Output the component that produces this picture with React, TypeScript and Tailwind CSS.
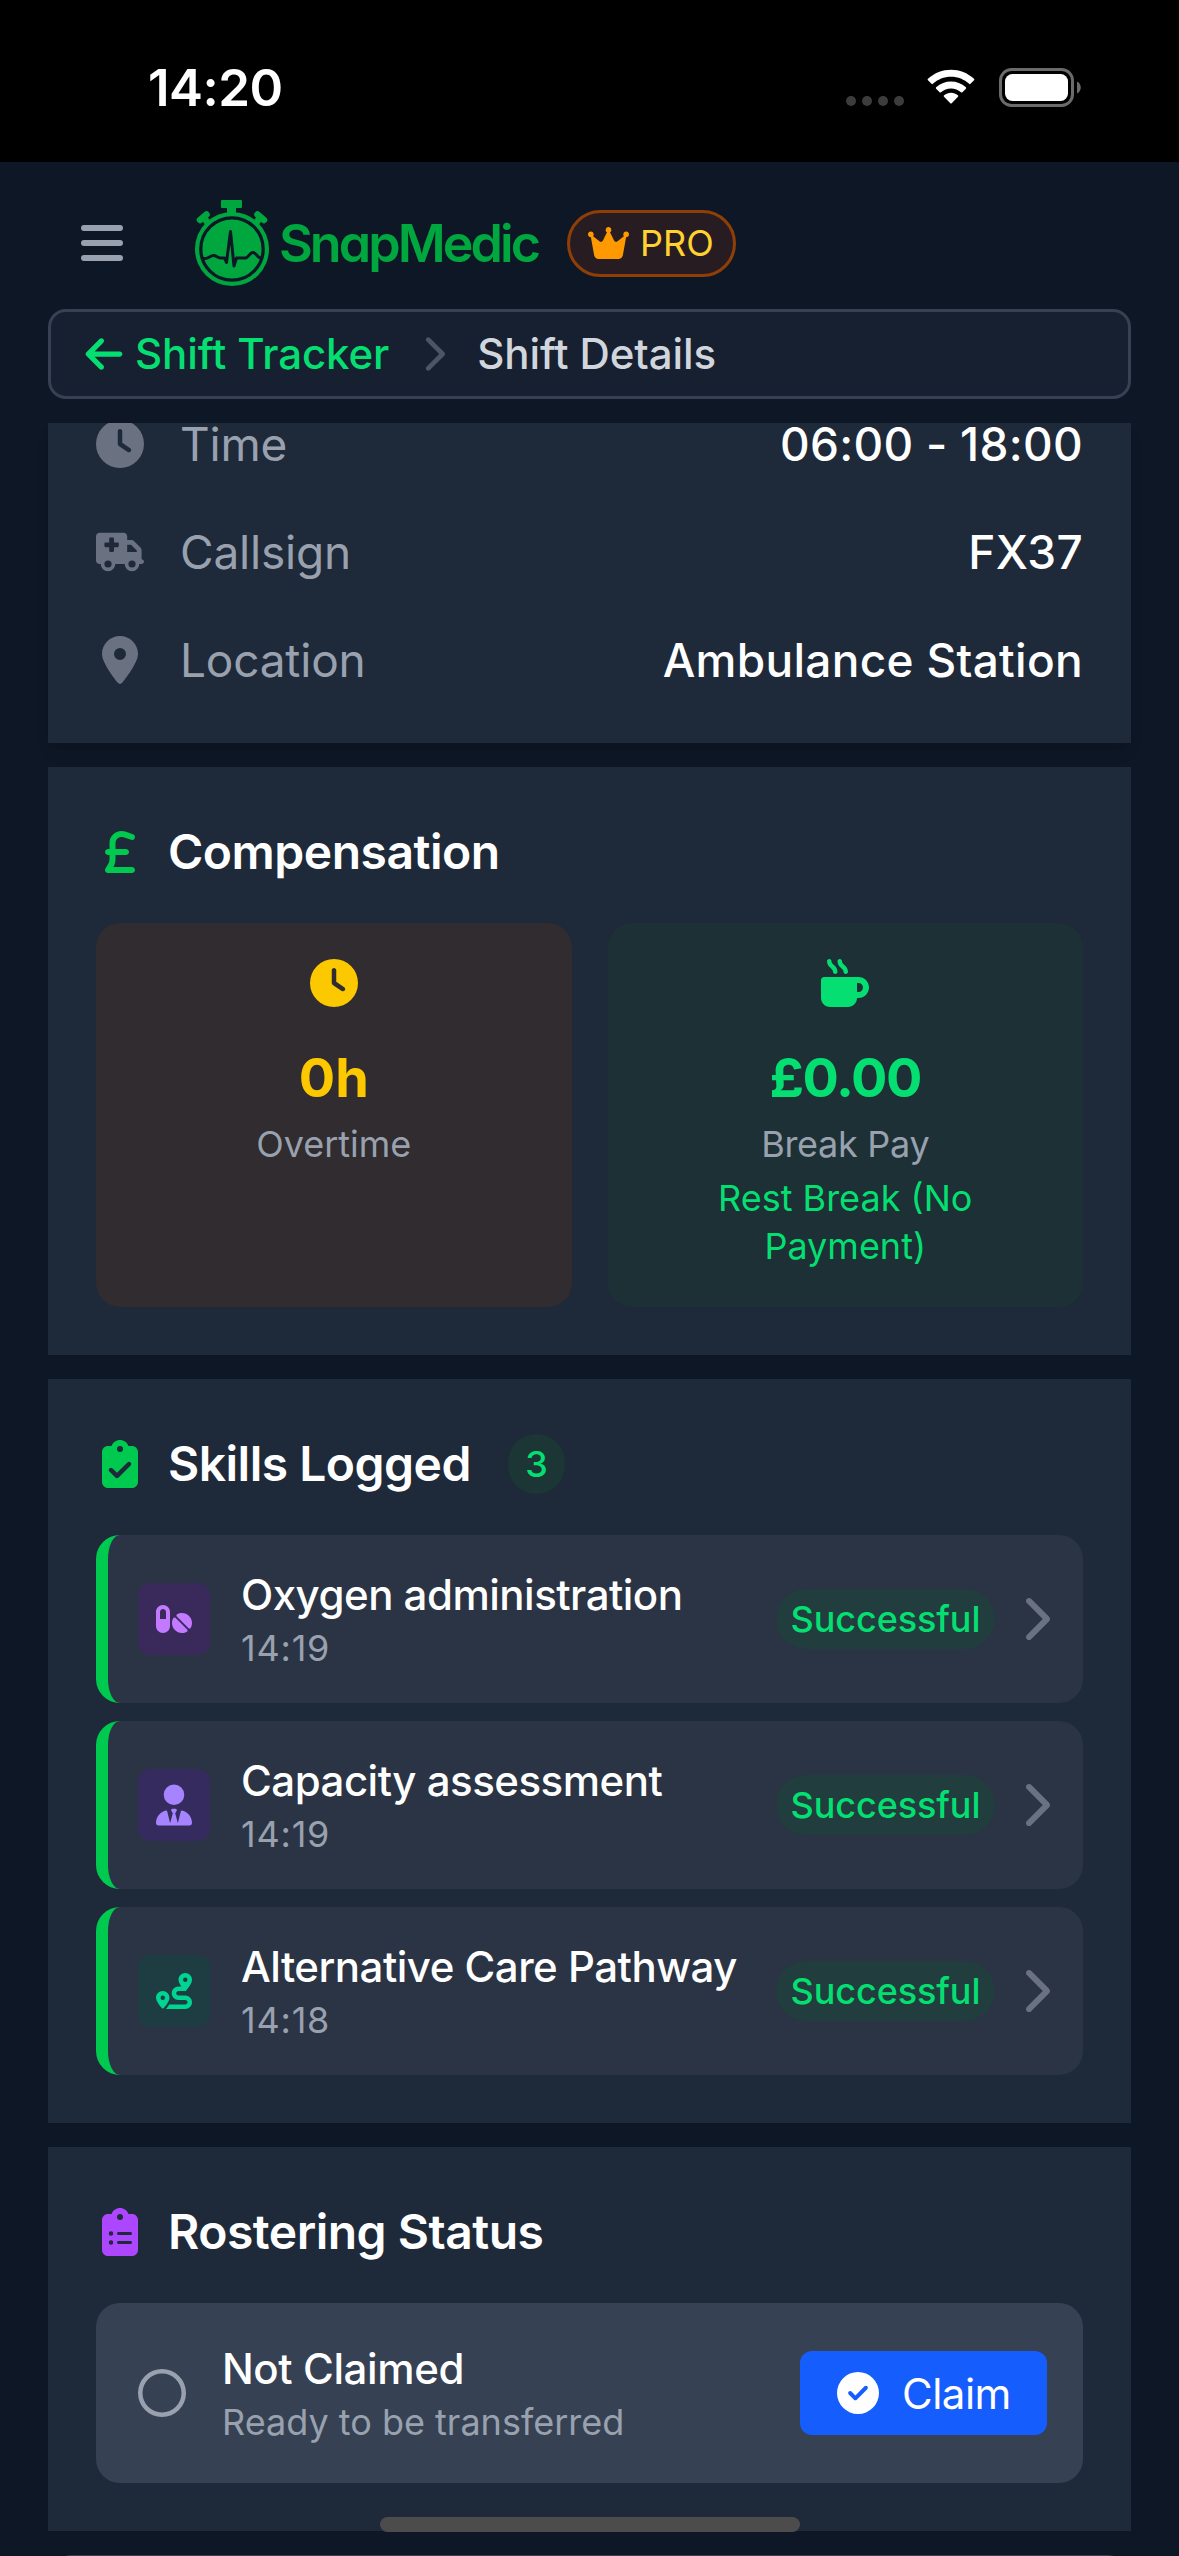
import React from "react";
import type { IconType } from "react-icons";
import {
  FaArrowLeft,
  FaChevronRight,
  FaCircleCheck,
  FaClipboardCheck,
  FaClipboardList,
  FaClock,
  FaCrown,
  FaLocationDot,
  FaMugHot,
  FaPills,
  FaRegCircle,
  FaRoute,
  FaSterlingSign,
  FaTruckMedical,
  FaUserTie,
} from "react-icons/fa6";

interface Skill {
  name: string;
  time: string;
  icon: IconType;
  tile: string;
}

const details = [
  { label: "Time", value: "06:00 - 18:00", icon: FaClock },
  { label: "Callsign", value: "FX37", icon: FaTruckMedical },
  { label: "Location", value: "Ambulance Station", icon: FaLocationDot },
];

const skills: Skill[] = [
  { name: "Oxygen administration", time: "14:19", icon: FaPills, tile: "bg-[#3a2a5c] text-[#c27aff]" },
  { name: "Capacity assessment", time: "14:19", icon: FaUserTie, tile: "bg-[#352b5e] text-[#a684ff]" },
  { name: "Alternative Care Pathway", time: "14:18", icon: FaRoute, tile: "bg-[#1d3d43] text-[#00d492]" },
];

const StatusBar: React.FC = () => (
  <div className="h-[162px] shrink-0 bg-black flex items-center justify-between pl-[148px] pr-[98px] pt-[13px]">
    <span className="text-[51px] font-semibold leading-none text-white tracking-[-0.5px]">14:20</span>
    <div className="flex items-center">
      <div className="flex gap-[6px] mt-[26px] mr-[22px]">
        <span className="w-[10px] h-[10px] rounded-full bg-[#3c3c3c]" />
        <span className="w-[10px] h-[10px] rounded-full bg-[#3c3c3c]" />
        <span className="w-[10px] h-[10px] rounded-full bg-[#3c3c3c]" />
        <span className="w-[10px] h-[10px] rounded-full bg-[#3c3c3c]" />
      </div>
      <svg width="50" height="37" viewBox="0 0 51 37" fill="#fff">
        <path d="M25.5 7.6c7.1 0 13.6 2.7 18.5 7.2.4.4 1 .4 1.4 0l3.6-3.6c.4-.4.4-1 0-1.5C36-2.7 15-2.7 2 9.7c-.4.4-.4 1.1 0 1.5l3.6 3.6c.4.4 1 .4 1.4 0 4.9-4.5 11.4-7.2 18.5-7.2z" />
        <path d="M25.5 19.6c3.9 0 7.4 1.4 10.2 3.8.4.4 1 .4 1.4 0l3.6-3.6c.4-.4.4-1.1 0-1.5-8.6-7.9-21.8-7.9-30.4 0-.4.4-.4 1.1 0 1.5l3.6 3.6c.4.4 1 .4 1.4 0 2.8-2.4 6.3-3.8 10.2-3.8z" />
        <path d="M32.6 28c.4-.4.4-1.1-.1-1.5-4-3.4-10-3.4-14 0-.5.4-.5 1.1-.1 1.5l6.400 6.5c.4.4 1 .4 1.4 0z" />
      </svg>
      <svg className="ml-[23px]" width="82" height="39" viewBox="0 0 82 39">
        <rect x="1.5" y="1.5" width="72" height="36" rx="11" fill="none" stroke="#6b6b6b" strokeWidth="3" />
        <rect x="6" y="6" width="63" height="27" rx="7.5" fill="#fff" />
        <path d="M78 13.5c5 2 5 10 0 12z" fill="#6b6b6b" />
      </svg>
    </div>
  </div>
);

const Logo: React.FC = () => (
  <svg width="350" height="88" viewBox="0 0 350 88">
    {/* Stopwatch */}
    <g fill="#00a63e">
      <path d="M28 1h19q1 0 1 1v6q0 1-1 1h-5v6h-9V9h-5q-1 0-1-1V2q0-1 1-1z" />
      <circle cx="38" cy="50" r="37" />
    </g>
    <g stroke="#00a63e" strokeWidth="6.5" strokeLinecap="round">
      <path d="m6 21 6.5-5.5M9.5 18l6 8" />
      <path d="m70 21-6.5-5.5M66.5 18l-6 8" />
    </g>
    <circle cx="38" cy="50" r="31.2" fill="none" stroke="#0e1726" strokeWidth="3.3" />
    <path
      d="M8.5 59.5h3c3 0 5-3 8-3s4 2.5 7 2.5h4l2 4.5 4-31 3.5 34.5 2.5-8h9c3 0 4-5.5 7.5-5.5s3.5 5.5 8 5.5h2"
      fill="none"
      stroke="#0e1726"
      strokeWidth="3"
      strokeLinejoin="round"
    />
    <text
      x="85"
      y="63"
      textLength="262"
      fill="#00a63e"
      className="font-['Inter',sans-serif] text-[52px] font-semibold [font-feature-settings:'cv11']"
    >
      SnapMedic
    </text>
  </svg>
);

const SectionTitle: React.FC<{ icon: React.ReactNode; children: React.ReactNode }> = ({ icon, children }) => (
  <div className="flex items-center h-[84px]">
    <span className="w-[48px] mr-[24px] flex justify-center text-[48px]">{icon}</span>
    <h2 className="text-[48px] font-semibold text-white tracking-[-0.5px]">{children}</h2>
  </div>
);

const App: React.FC = () => {
  return (
    <div className="relative w-[1179px] h-[2556px] overflow-hidden bg-[#0e1726] flex flex-col font-['Inter',sans-serif]">
      <div className="relative z-10 shrink-0 h-[423px] bg-[#0e1726] flex flex-col">
        <StatusBar />

        <header className="shrink-0 h-[147px] flex items-center pl-[81px] pt-[15px]">
          <div className="flex flex-col gap-[9px] w-[42px]">
            <span className="h-[6px] rounded-full bg-[#99a1af]" />
            <span className="h-[6px] rounded-full bg-[#99a1af]" />
            <span className="h-[6px] rounded-full bg-[#99a1af]" />
          </div>
          <div className="ml-[71px]">
            <Logo />
          </div>
          <div className="ml-[23px] w-[169px] h-[67px] rounded-full border-[3px] border-[#8f3e06] bg-[#271c21] flex items-center pl-[18px]">
            <FaCrown className="w-[41px] h-[38px] text-[#fe9a00]" />
            <span className="ml-[11px] text-[36px] text-[#ffd230]">PRO</span>
          </div>
        </header>

        {/* Breadcrumb */}
        <nav className="shrink-0 mx-[48px] h-[90px] rounded-[18px] border-[3px] border-[#364153] bg-[#172031] flex items-center pl-[34px] pb-[1px] text-[42px] tracking-[-0.1px] font-medium">
          <FaArrowLeft className="w-[38px] h-[42px] text-[#05df72]" />
          <span className="ml-[12px] text-[#05df72]">Shift Tracker</span>
          <FaChevronRight className="ml-[32px] w-[24px] h-[42px] text-[#4a5565]" />
          <span className="ml-[32px] text-[#d1d5dc]">Shift Details</span>
        </nav>
      </div>

      <main className="flex-1 min-h-0 px-[48px] flex flex-col gap-[24px]">
        <section className="shrink-0 h-[320px] px-[48px] bg-[#1e2939] shadow-lg flex flex-col justify-end pb-[29px]">
          {details.map(({ label, value, icon: Icon }) => (
            <div key={label} className="shrink-0 h-[108px] flex items-center text-[46px] leading-[40px]">
              <Icon className="w-[48px] h-[48px] text-[#6a7282]" />
              <span className="ml-[36px] tracking-[-0.2px] text-[#99a1af]">{label}</span>
              <span className="ml-auto font-medium tracking-[0.3px] text-white">{value}</span>
            </div>
          ))}
        </section>

        <section className="shrink-0 h-[588px] p-[48px] pt-[43px] bg-[#1e2939]">
          <SectionTitle icon={<FaSterlingSign className="text-[#00c950]" />}>Compensation</SectionTitle>
          <div className="mt-[29px] grid grid-cols-2 gap-[36px] text-center">
            <div className="h-[384px] rounded-[24px] bg-[#302c2f] flex flex-col items-center pt-[36px]">
              <FaClock className="w-[48px] h-[48px] text-[#fcc800]" />
              <p className="mt-[35px] text-[54px] leading-[72px] font-bold text-[#fcc800]">0h</p>
              <p className="mt-[6px] text-[36px] leading-[48px] text-[#99a1af]">Overtime</p>
            </div>
            <div className="h-[384px] rounded-[24px] bg-[#1d3035] flex flex-col items-center pt-[36px]">
              <FaMugHot className="w-[48px] h-[48px] text-[#05df72]" />
              <p className="mt-[35px] text-[54px] leading-[72px] font-bold tracking-[-1.4px] text-[#05df72]">£0.00</p>
              <p className="mt-[6px] text-[36px] leading-[48px] tracking-[-0.3px] text-[#99a1af]">Break Pay</p>
              <p className="mt-[6px] w-[300px] text-[36px] leading-[48px] text-[#05df72]">Rest Break (No Payment)</p>
            </div>
          </div>
        </section>

        <section className="shrink-0 h-[744px] p-[48px] pt-[43px] bg-[#1e2939]">
          <div className="flex items-center">
            <SectionTitle icon={<FaClipboardCheck className="text-[#00c950]" />}>Skills Logged</SectionTitle>
            <span className="ml-[37px] w-[57px] h-[60px] rounded-full bg-[#1c3535] flex items-center justify-center text-[36px] font-medium text-[#05df72]">
              3
            </span>
          </div>
          <div className="mt-[29px] flex flex-col gap-[18px]">
            {skills.map(({ name, time, icon: Icon, tile }) => (
              <div key={name} className="h-[168px] rounded-[24px] border-l-[12px] border-[#00c950] bg-[#2a3444] flex items-center pl-[30px] pr-[33px]">
                <div className={`w-[72px] h-[72px] rounded-[12px] flex items-center justify-center ${tile}`}>
                  <Icon className="w-[36px] h-[42px]" />
                </div>
                <div className="ml-[31px] pb-[2px]">
                  <p className="text-[42px] leading-[60px] font-medium tracking-[-0.5px] text-white">{name}</p>
                  <p className="-mt-[1px] text-[36px] leading-[48px] tracking-[0.8px] text-[#99a1af]">{time}</p>
                </div>
                <span className="ml-auto w-[219px] h-[60px] rounded-full bg-[#213d3e] flex items-center justify-center text-[36px] font-medium tracking-[-0.1px] text-[#05df72]">
                  Successful
                </span>
                <FaChevronRight className="ml-[25px] w-[30px] h-[48px] text-[#6a7282]" />
              </div>
            ))}
          </div>
        </section>

        <section className="shrink-0 h-[384px] p-[48px] pt-[43px] bg-[#1e2939]">
          <SectionTitle icon={<FaClipboardList className="text-[#ad46ff]" />}>Rostering Status</SectionTitle>
          <div className="mt-[29px] h-[180px] rounded-[24px] bg-[#364153] flex items-center pl-[42px] pr-[36px]">
            <FaRegCircle className="w-[48px] h-[48px] text-[#99a1af]" />
            <div className="ml-[36px] pb-[2px]">
              <p className="text-[42px] leading-[60px] font-medium tracking-[-0.4px] text-white">Not Claimed</p>
              <p className="-mt-[1px] text-[36px] leading-[48px] text-[#99a1af]">Ready to be transferred</p>
            </div>
            <button className="ml-auto w-[247px] h-[84px] rounded-[12px] bg-[#155dfc] flex items-center pl-[37px] text-white">
              <FaCircleCheck className="w-[42px] h-[42px]" />
              <span className="ml-[23px] text-[42px] tracking-[-0.5px]">Claim</span>
            </button>
          </div>
        </section>

        <section className="shrink-0 h-[100px] rounded-t-[24px] bg-[#364153]" />
      </main>

      {/* Home indicator */}
      <div className="absolute left-[380px] top-[2517px] w-[420px] h-[15px] rounded-full bg-[#4c4c4c]" />
    </div>
  );
};

export default App;
